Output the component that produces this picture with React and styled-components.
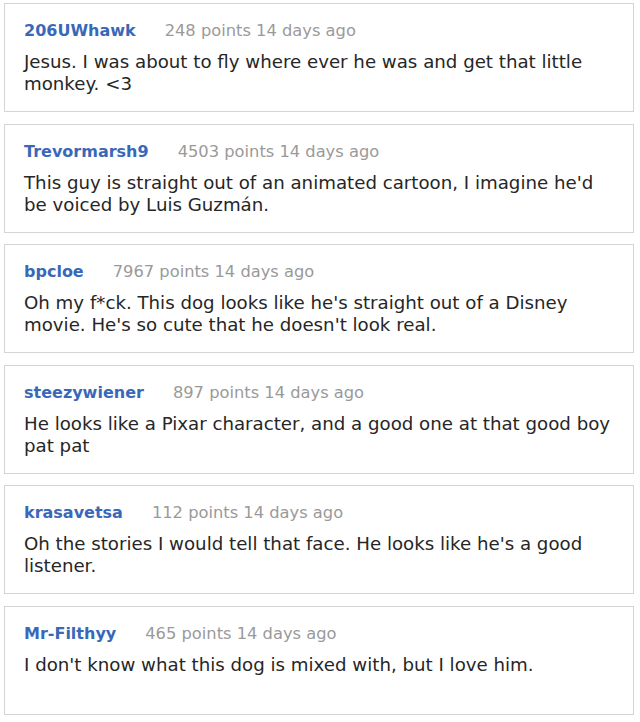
import React from "react";
import styled, { createGlobalStyle } from "styled-components";

const GlobalStyle = createGlobalStyle`
  body {
    margin: 0;
    background: #fff;
    font-family: "DejaVu Sans", Verdana, sans-serif;
  }
`;

const List = styled.div`
  display: flex;
  flex-direction: column;
  gap: 11.6px;
  padding: 3px 6px 0 4px;
`;

const Card = styled.div`
  box-sizing: border-box;
  height: 109px;
  border: 1px solid #d4d4d4;
  background: #fff;
  padding: 17px 20px 0 19px;
`;

const Meta = styled.div`
  display: flex;
  align-items: baseline;
  gap: 29px;
  font-size: 16.3px;
  line-height: 20px;
`;

const User = styled.span`
  font-weight: bold;
  font-size: 16px;
  color: #3a68b8;
`;

const Stats = styled.span`
  color: #9a9a9a;
`;

const Body = styled.p`
  margin: 10px 0 0;
  font-size: 18.2px;
  line-height: 22px;
  color: #262626;
`;

const comments = [
  {
    user: "206UWhawk",
    points: 248,
    text: "Jesus. I was about to fly where ever he was and get that little monkey. <3",
  },
  {
    user: "Trevormarsh9",
    points: 4503,
    text: "This guy is straight out of an animated cartoon, I imagine he'd be voiced by Luis Guzmán.",
  },
  {
    user: "bpcloe",
    points: 7967,
    text: "Oh my f*ck. This dog looks like he's straight out of a Disney movie. He's so cute that he doesn't look real.",
  },
  {
    user: "steezywiener",
    points: 897,
    text: "He looks like a Pixar character, and a good one at that good boy pat pat",
  },
  {
    user: "krasavetsa",
    points: 112,
    text: "Oh the stories I would tell that face. He looks like he's a good listener.",
  },
  {
    user: "Mr-Filthyy",
    points: 465,
    text: "I don't know what this dog is mixed with, but I love him.",
  },
];

export default function App() {
  return (
    <>
      <GlobalStyle />
      <List>
        {comments.map((c) => (
          <Card key={c.user}>
            <Meta>
              <User>{c.user}</User>
              <Stats>{c.points} points 14 days ago</Stats>
            </Meta>
            <Body>{c.text}</Body>
          </Card>
        ))}
      </List>
    </>
  );
}
